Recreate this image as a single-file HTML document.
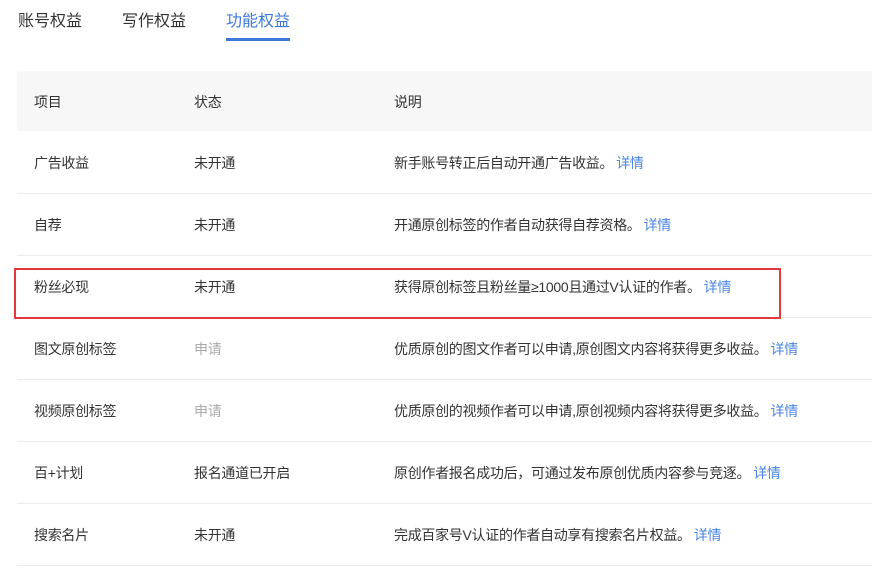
<!DOCTYPE html><html><head><meta charset="utf-8"><style>
body{margin:0;width:872px;height:568px;overflow:hidden;background:#fff;font-family:"Liberation Sans","Noto Sans CJK SC",sans-serif;color:#333}
.tab{position:absolute;top:11px;font-size:16px;line-height:22px;color:#333}
.act{color:#3c78d8}
.ul{position:absolute;left:226px;top:38px;width:64px;height:3px;background:#3c78d8}
.hd{position:absolute;left:17px;top:71px;width:855px;height:60px;background:#f7f7f7}
.r{position:absolute;left:17px;width:855px;height:62px;border-bottom:1px solid #ececec}
.c{position:absolute;font-size:14px;line-height:18px;white-space:nowrap;letter-spacing:-0.3px}
.g{color:#aaa}
a{color:#4a84e4;text-decoration:none;margin-left:3px}
.box{position:absolute;left:14px;top:268px;width:763px;height:47px;border:2px solid #e4393c}
</style></head><body>
<div class="tab" style="left:18px">账号权益</div>
<div class="tab" style="left:122px">写作权益</div>
<div class="tab act" style="left:226px">功能权益</div>
<div class="ul"></div>
<div class="hd"></div>
<div class="c" style="left:34px;top:93px">项目</div><div class="c" style="left:194px;top:93px">状态</div><div class="c" style="left:394px;top:93px">说明</div>
<div class="r" style="top:131px"></div><div class="r" style="top:193px"></div><div class="r" style="top:255px"></div><div class="r" style="top:317px"></div><div class="r" style="top:379px"></div><div class="r" style="top:441px"></div><div class="r" style="top:503px"></div>
<div class="c" style="left:34px;top:154px">广告收益</div><div class="c" style="left:194px;top:154px">未开通</div><div class="c" style="left:394px;top:154px">新手账号转正后自动开通广告收益。<a>详情</a></div>
<div class="c" style="left:34px;top:216px">自荐</div><div class="c" style="left:194px;top:216px">未开通</div><div class="c" style="left:394px;top:216px">开通原创标签的作者自动获得自荐资格。<a>详情</a></div>
<div class="c" style="left:34px;top:278px">粉丝必现</div><div class="c" style="left:194px;top:278px">未开通</div><div class="c" style="left:394px;top:278px">获得原创标签且粉丝量≥1000且通过V认证的作者。<a>详情</a></div>
<div class="c" style="left:34px;top:340px">图文原创标签</div><div class="c g" style="left:194px;top:340px">申请</div><div class="c" style="left:394px;top:340px">优质原创的图文作者可以申请,原创图文内容将获得更多收益。<a>详情</a></div>
<div class="c" style="left:34px;top:402px">视频原创标签</div><div class="c g" style="left:194px;top:402px">申请</div><div class="c" style="left:394px;top:402px">优质原创的视频作者可以申请,原创视频内容将获得更多收益。<a>详情</a></div>
<div class="c" style="left:34px;top:464px">百+计划</div><div class="c" style="left:194px;top:464px">报名通道已开启</div><div class="c" style="left:394px;top:464px">原创作者报名成功后，可通过发布原创优质内容参与竞逐。<a>详情</a></div>
<div class="c" style="left:34px;top:526px">搜索名片</div><div class="c" style="left:194px;top:526px">未开通</div><div class="c" style="left:394px;top:526px">完成百家号V认证的作者自动享有搜索名片权益。<a>详情</a></div>
<div class="box"></div>
</body></html>
